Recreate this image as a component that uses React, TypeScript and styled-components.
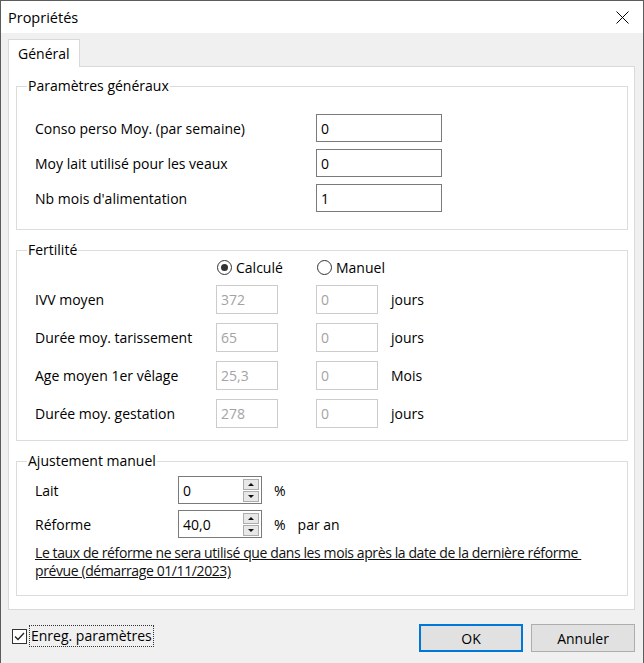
import { Fragment } from 'react';
import styled, { createGlobalStyle } from 'styled-components';

const GlobalStyle = createGlobalStyle`
  html, body { margin: 0; padding: 0; background: #f0f0f0; }
  body {
    font-family: "Open Sans", "Noto Sans", sans-serif;
    font-size: 14px;
    color: #000;
  }
`;

const Window = styled.div`
  width: 644px;
  height: 663px;
  box-sizing: border-box;
  border: 1px solid #5c5c5c;
  border-bottom: none;
  background: #f0f0f0;
  display: flex;
  flex-direction: column;
`;

const TitleBar = styled.div`
  height: 32px;
  background: #fff;
  display: flex;
  align-items: center;
  justify-content: space-between;
  padding: 0 14px 0 7px;
  font-size: 14.5px;
`;

const CloseIcon = styled.svg`
  width: 13px;
  height: 13px;
`;

const Body = styled.div`
  flex: 1;
  padding: 6px 8px 0 7px;
  display: flex;
  flex-direction: column;
`;

const TabStrip = styled.div`
  display: flex;
  height: 28px;
`;

const Tab = styled.div`
  background: #fff;
  border: 1px solid #d9d9d9;
  border-bottom: none;
  padding: 0 9px;
  line-height: 27px;
  position: relative;
  z-index: 1;
  height: 28px;
  box-sizing: border-box;
`;

const Panel = styled.div`
  background: #fff;
  border: 1px solid #d9d9d9;
  margin-top: -1px;
  height: 544px;
  box-sizing: border-box;
  padding: 10px 6px 0 7px;
  display: flex;
  flex-direction: column;
  gap: 11px;
`;

const Group = styled.fieldset<{ $height: number }>`
  margin: 0;
  height: ${p => p.$height}px;
  box-sizing: border-box;
  border: 1px solid #dcdcdc;
  padding: 0 12px 0 18px;

  legend {
    padding: 0 1px 0 1px;
    margin-left: -8px;
    line-height: 18px;
  }
`;

const FieldGrid = styled.div`
  display: grid;
  grid-template-columns: 281px 126px;
  row-gap: 7px;
  align-items: center;
  padding-top: 19px;
`;

const TextBox = styled.div<{ $width?: number; $disabled?: boolean }>`
  width: ${p => p.$width ?? 126}px;
  height: ${p => (p.$disabled ? 29 : 28)}px;
  box-sizing: border-box;
  border: 1px solid ${p => (p.$disabled ? '#cccccc' : '#7a7a7a')};
  background: #fff;
  color: ${p => (p.$disabled ? '#a3a3a3' : '#000')};
  padding-left: 4px;
  display: flex;
  align-items: center;
`;

const FertGrid = styled.div`
  display: grid;
  grid-template-columns: 181px 100px 75px auto;
  align-items: center;
  row-gap: 9px;
`;

const RadioLabel = styled.div`
  display: flex;
  align-items: center;
  gap: 4px;
  height: 17px;
  margin-left: 1px;
`;

const RadioCircle = styled.span<{ $checked?: boolean }>`
  width: 15px;
  height: 15px;
  box-sizing: border-box;
  border-radius: 50%;
  border: 1px solid #333;
  display: flex;
  align-items: center;
  justify-content: center;

  &::after {
    content: '';
    display: ${p => (p.$checked ? 'block' : 'none')};
    width: 7px;
    height: 7px;
    border-radius: 50%;
    background: #333;
  }
`;

const Unit = styled.span``;

const AdjustGrid = styled.div`
  display: grid;
  grid-template-columns: 143px auto;
  row-gap: 6px;
  align-items: center;
  padding-top: 6px;
`;

const SpinRow = styled.div`
  display: flex;
  align-items: center;
  gap: 12px;
`;

const SpinBox = styled.div`
  width: 84px;
  height: 28px;
  box-sizing: border-box;
  border: 1px solid #7a7a7a;
  background: #fff;
  display: flex;
  align-items: center;
  padding: 0 2px 0 4px;
`;

const SpinValue = styled.span`
  flex: 1;
`;

const SpinButtons = styled.div`
  display: flex;
  flex-direction: column;
  gap: 1px;
`;

const SpinButton = styled.div<{ $down?: boolean }>`
  width: 16px;
  height: 11px;
  box-sizing: border-box;
  border: 1px solid #adadad;
  background: #e8e8e8;
  display: flex;
  align-items: center;
  justify-content: center;

  &::after {
    content: '';
    border-left: 3px solid transparent;
    border-right: 3px solid transparent;
    ${p =>
      p.$down
        ? 'border-top: 3px solid #111;'
        : 'border-bottom: 3px solid #111;'}
  }
`;

const Note = styled.div`
  margin-top: 6px;
  text-decoration: underline;
  line-height: 18px;
  letter-spacing: -0.4px;
  white-space: nowrap;
  color: #111;
`;

const Footer = styled.div`
  display: flex;
  align-items: center;
  justify-content: space-between;
  padding: 14px 0 0 4px;
`;

const CheckLabel = styled.div`
  display: flex;
  align-items: center;
  gap: 3px;
  margin-top: -4px;
`;

const CheckBox = styled.span`
  width: 15px;
  height: 15px;
  box-sizing: border-box;
  border: 1px solid #333;
  background: #fff;
  display: flex;
  align-items: center;
  justify-content: center;
`;

const FocusText = styled.span`
  outline: 1px dotted #333;
  outline-offset: 0;
  padding: 0 1px;
  line-height: 20px;
`;

const Buttons = styled.div`
  display: flex;
  gap: 8px;
`;

const Button = styled.div<{ $default?: boolean }>`
  width: 104px;
  height: 28px;
  box-sizing: border-box;
  background: #e1e1e1;
  border: ${p => (p.$default ? '2px solid #0078d7' : '1px solid #adadad')};
  display: flex;
  align-items: center;
  justify-content: center;
`;

const fertRows = [
  { label: 'IVV moyen', calc: '372', unit: 'jours' },
  { label: 'Durée moy. tarissement', calc: '65', unit: 'jours' },
  { label: 'Age moyen 1er vêlage', calc: '25,3', unit: 'Mois' },
  { label: 'Durée moy. gestation', calc: '278', unit: 'jours' },
];

const Spin = ({ value }: { value: string }) => (
  <SpinBox>
    <SpinValue>{value}</SpinValue>
    <SpinButtons>
      <SpinButton />
      <SpinButton $down />
    </SpinButtons>
  </SpinBox>
);

export default function App() {
  return (
    <>
      <GlobalStyle />
      <Window>
        <TitleBar>
          <span>Propriétés</span>
          <CloseIcon viewBox="0 0 13 13">
            <path d="M0.5 0.5L12.5 12.5M12.5 0.5L0.5 12.5" stroke="#000" strokeWidth="1" />
          </CloseIcon>
        </TitleBar>
        <Body>
          <TabStrip>
            <Tab>Général</Tab>
          </TabStrip>
          <Panel>
            <Group $height={153}>
              <legend>Paramètres généraux</legend>
              <FieldGrid>
                <span>Conso perso Moy. (par semaine)</span>
                <TextBox>0</TextBox>
                <span>Moy lait utilisé pour les veaux</span>
                <TextBox>0</TextBox>
                <span>Nb mois d'alimentation</span>
                <TextBox>1</TextBox>
              </FieldGrid>
            </Group>

            <Group $height={200}>
              <legend>Fertilité</legend>
              <FertGrid>
                <span />
                <RadioLabel>
                  <RadioCircle $checked />
                  Calculé
                </RadioLabel>
                <RadioLabel>
                  <RadioCircle />
                  Manuel
                </RadioLabel>
                <span />
                {fertRows.map(r => (
                  <Fragment key={r.label}>
                    <span>{r.label}</span>
                    <TextBox $width={62} $disabled>{r.calc}</TextBox>
                    <TextBox $width={62} $disabled>0</TextBox>
                    <Unit>{r.unit}</Unit>
                  </Fragment>
                ))}
              </FertGrid>
            </Group>

            <Group $height={144}>
              <legend>Ajustement manuel</legend>
              <AdjustGrid>
                <span>Lait</span>
                <SpinRow>
                  <Spin value="0" />
                  <span>%</span>
                </SpinRow>
                <span>Réforme</span>
                <SpinRow>
                  <Spin value="40,0" />
                  <span>%</span>
                  <span>par an</span>
                </SpinRow>
              </AdjustGrid>
              <Note>
                Le taux de réforme ne sera utilisé que dans les mois après la date de la dernière réforme&nbsp;
                <br />
                prévue (démarrage 01/11/2023)
              </Note>
            </Group>
          </Panel>
          <Footer>
            <CheckLabel>
              <CheckBox>
                <svg width="11" height="9" viewBox="0 0 11 9">
                  <path d="M1 4.5L4 7.5L10 1" fill="none" stroke="#222" strokeWidth="1.3" />
                </svg>
              </CheckBox>
              <FocusText>Enreg. paramètres</FocusText>
            </CheckLabel>
            <Buttons>
              <Button $default>OK</Button>
              <Button>Annuler</Button>
            </Buttons>
          </Footer>
        </Body>
      </Window>
    </>
  );
}
